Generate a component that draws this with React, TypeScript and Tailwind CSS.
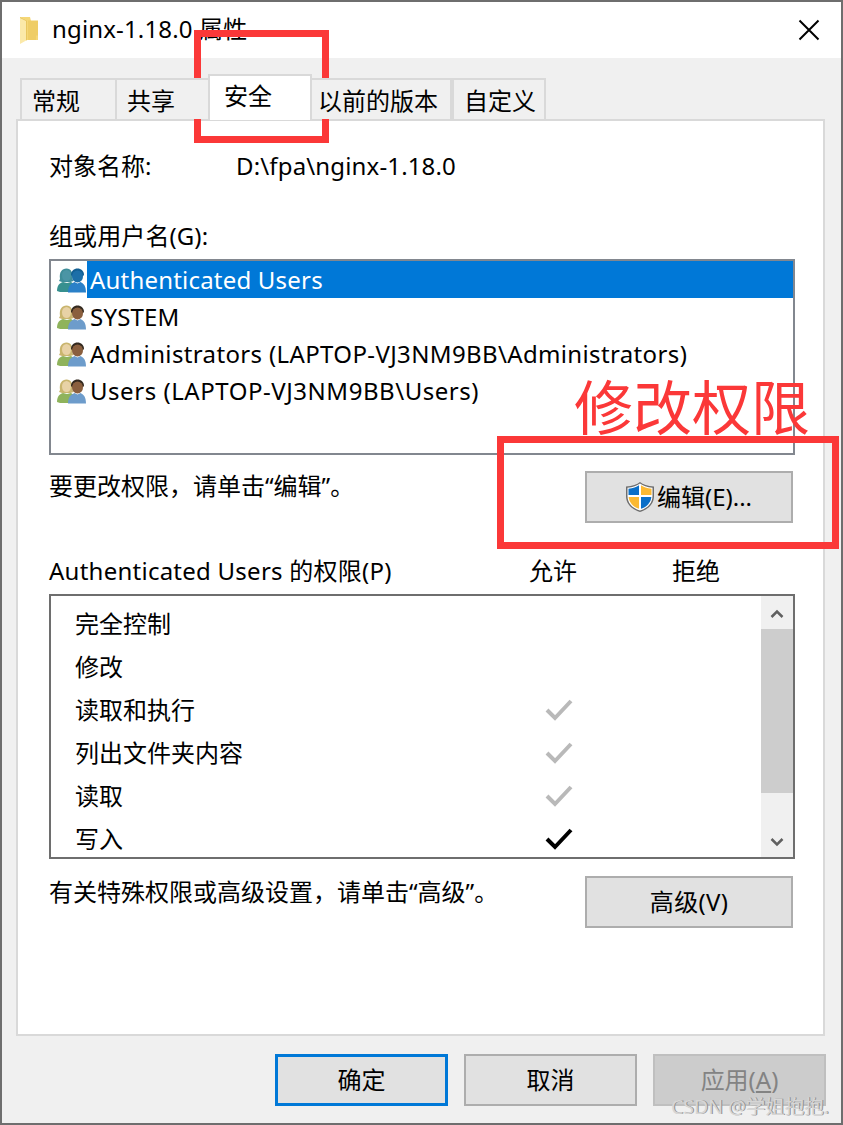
const font = {
  fontFamily: '"Noto Sans", "Noto Sans CJK SC", sans-serif',
};

function FolderIcon() {
  return (
    <svg width="19" height="28" viewBox="0 0 19 28" className="shrink-0">
      <path d="M0 1h10l1 4h7v19l-11 0z" fill="#f5d777" />
      <path d="M8 4.500h10v15l-2 0 0 4.500H8z" fill="#efcd66" />
      <path d="M0 1l7 3.500V24l-7 4z" fill="#fbe9a9" />
      <path d="M0 1l7 3.500V24l-1 .6V5L0 2z" fill="#e8c660" />
    </svg>
  );
}

function UsersIcon({ selected }: { selected?: boolean }) {
  const hairBack = selected ? "#3f8d99" : "#c9b56e";
  const faceBack = selected ? "#4b95a5" : "#e8d2a6";
  const bodyBack = selected ? "#37908f" : "#8fb35c";
  const hairFront = selected ? "#135f93" : "#33291f";
  const faceFront = selected ? "#1d6fa8" : "#8a5f3e";
  const bodyFront = selected ? "#2a80c8" : "#6d9ccb";
  return (
    <svg width="29" height="26" viewBox="0 0 29 26" className="shrink-0">
      <path d="M3 12C2 5 5 1.500 9.500 1.500S16 5 15.500 12l1 2-3 1H5l-3-1z" fill={hairBack} />
      <ellipse cx="9.500" cy="8.500" rx="4.500" ry="5.500" fill={faceBack} />
      <path d="M0 24c0-5 2-8 6-9l4 1 4-1 3 2v8l-14 0z" fill={bodyBack} />
      <path d="M14 8c0-4 3-6.500 6.500-6.500S27 4 27 8l-1 1H15z" fill={hairFront} />
      <ellipse cx="20.500" cy="9.500" rx="5.500" ry="6" fill={faceFront} />
      <path d="M11 25.500c0-6 2.500-9 6.500-10.500l3 1.500 3-1.500c3.500 1.500 5.500 4.500 5.500 10.500z" fill={bodyFront} />
    </svg>
  );
}

function ShieldIcon() {
  return (
    <svg width="28" height="30" viewBox="0 0 28 30" className="shrink-0">
      <path d="M14 0c3 2.500 7.500 4 14 4.500V14c0 8-6 13.500-14 16C6 27.500 0 22 0 14V4.500C6.500 4 11 2.500 14 0z" fill="#6e6e6e" />
      <path d="M14 1.500c3 2.200 7 3.700 12.500 4.300V14c0 7.500-5.500 12.500-12.500 14.500C7 26.500 1.500 21.500 1.500 14V5.800C7 5.200 11 3.700 14 1.500z" fill="#fff" />
      <path d="M13 3.300V13H2.500V6.800C7 6.300 10.500 5 13 3.300z" fill="#0a6fc8" />
      <path d="M15 3.300c2.500 1.700 6 3 10.500 3.500V13H15z" fill="#fbb933" />
      <path d="M2.600 15H13v11.800C7 24.800 3.200 20.500 2.600 15z" fill="#fbb933" />
      <path d="M15 15h10.400c-.6 5.500-4.400 9.800-10.400 11.800z" fill="#0a6fc8" />
    </svg>
  );
}

function Check({ muted }: { muted?: boolean }) {
  return (
    <svg width="28" height="24" viewBox="0 0 28 24">
      <path
        d="M2 12l8 8L26 3"
        fill="none"
        stroke={muted ? "#b9b9b9" : "#000"}
        strokeWidth="4"
      />
    </svg>
  );
}

const buttonTones = {
  normal: "bg-[#e1e1e1] border-2 border-[#adadad] text-black",
  primary: "bg-[#e1e1e1] border-[3px] border-[#0078d7] text-black",
  disabled: "bg-[#cccccc] border-2 border-[#bfbfbf] text-[#838383]",
};

function Button({
  children,
  className,
  tone = "normal",
}: {
  children: React.ReactNode;
  className?: string;
  tone?: keyof typeof buttonTones;
}) {
  return (
    <button className={`flex items-center justify-center text-[24px] ${buttonTones[tone]} ${className ?? ""}`}>
      {children}
    </button>
  );
}

const tabs = [
  { label: "常规", cls: "w-[95px] pl-[10px] border-r-0" },
  { label: "共享", cls: "w-[93px] pl-[10px] border-r-0" },
  { label: "安全", active: true },
  { label: "以前的版本", cls: "w-[140px] pl-[6px] border-l-0" },
  { label: "自定义", cls: "w-[94px] pl-[10px]" },
];

const users = [
  { name: "Authenticated Users", selected: true, track: "tracking-[0.2px]" },
  { name: "SYSTEM", track: "tracking-[0.2px]" },
  { name: "Administrators (LAPTOP-VJ3NM9BB\\Administrators)", track: "tracking-[0.36px]" },
  { name: "Users (LAPTOP-VJ3NM9BB\\Users)", track: "tracking-[0.54px]" },
];

const perms = [
  { name: "完全控制" },
  { name: "修改" },
  { name: "读取和执行", check: "muted" },
  { name: "列出文件夹内容", check: "muted" },
  { name: "读取", check: "muted" },
  { name: "写入", check: "solid" },
];

export default function App() {
  return (
    <div
      style={font}
      className="relative w-[843px] h-[1125px] overflow-hidden flex flex-col bg-[#f0f0f0] border-2 border-[#6e6e6e] text-[24px] text-black"
    >
      {/* Title bar */}
      <div className="h-[56px] shrink-0 bg-white flex items-center pl-[18px]">
        <FolderIcon />
        <span className="ml-[13px] leading-[32px] tracking-[0.15px] -mt-[2px]">nginx-1.18.0 属性</span>
        <svg width="22" height="22" viewBox="0 0 22 22" className="ml-auto mr-[21px]">
          <path d="M1.500 1.500l19 19M20.500 1.500l-19 19" stroke="#000" strokeWidth="2" />
        </svg>
      </div>

      {/* Tabs */}
      <div className="flex items-end h-[45px] mt-[16px] pl-[18px] shrink-0 relative z-10">
        {tabs.map((t) =>
          t.active ? (
            <div
              key={t.label}
              className="w-[104px] h-[46px] -mb-px bg-white border-2 border-b-0 border-[#d9d9d9] pl-[14px] pt-[2px] leading-[36px]"
            >
              {t.label}
            </div>
          ) : (
            <div
              key={t.label}
              className={`${t.cls} h-[41px] bg-[#f0f0f0] border-2 border-b-0 border-[#d9d9d9] pt-[3px] leading-[36px] whitespace-nowrap overflow-hidden`}
            >
              {t.label}
            </div>
          )
        )}
      </div>

      {/* Panel */}
      <div className="ml-[14px] w-[809px] h-[917px] shrink-0 bg-white border-2 border-[#d9d9d9] pl-[31px] pr-[28px] flex flex-col">
        <div className="flex h-[32px] mt-[29px] leading-[32px]">
          <span className="w-[187px]">对象名称:</span>
          <span className="tracking-[0.15px]">D:\fpa\nginx-1.18.0</span>
        </div>
        <div className="h-[32px] mt-[38px] leading-[32px] tracking-[0.1px]">组或用户名(G):</div>

        <div className="mt-[7px] h-[196px] shrink-0 border-2 border-[#82878f] pl-[6px]">
          {users.map((u) => (
            <div key={u.name} className="flex items-center h-[37px]">
              <UsersIcon selected={u.selected} />
              <span
                className={`ml-[1px] pl-[3px] h-[37px] leading-[37px] whitespace-nowrap ${u.track} ${u.selected ? "flex-1 bg-[#0078d7] text-white" : ""}`}
              >
                {u.name}
              </span>
            </div>
          ))}
        </div>

        <div className="flex justify-between mt-[16px]">
          <span className="h-[32px] leading-[32px] -mt-px">{"要更改权限\uFF0C请单击“编辑”。"}</span>
          <Button className="w-[208px] h-[52px] gap-[3px] mr-[2px]">
            <ShieldIcon />
            <span>编辑(E)...</span>
          </Button>
        </div>

        <div className="flex h-[32px] mt-[32px] leading-[32px]">
          <span className="w-[480px] tracking-[0.25px]">Authenticated Users 的权限(P)</span>
          <span className="w-[143px]">允许</span>
          <span>拒绝</span>
        </div>

        <div className="mt-[7px] h-[265px] shrink-0 border-2 border-[#6e6e6e] flex">
          <div className="flex-1 pt-[6px] pl-[24px]">
            {perms.map((p) => (
              <div key={p.name} className="flex items-center h-[43px]">
                <span className="w-[470px] leading-[32px]">{p.name}</span>
                {p.check && <Check muted={p.check === "muted"} />}
              </div>
            ))}
          </div>
          <div className="w-[32px] bg-[#f0f0f0] flex flex-col">
            <div className="h-[33px] pt-[3px] flex items-center justify-center">
              <svg width="14" height="10" viewBox="0 0 14 10">
                <path d="M1.500 8L7 2.500 12.500 8" fill="none" stroke="#606060" strokeWidth="2.500" />
              </svg>
            </div>
            <div className="h-[164px] bg-[#cdcdcd]" />
            <div className="flex-1 flex items-end justify-center pb-[10px]">
              <svg width="14" height="10" viewBox="0 0 14 10">
                <path d="M1.500 2L7 7.500 12.500 2" fill="none" stroke="#606060" strokeWidth="2.500" />
              </svg>
            </div>
          </div>
        </div>

        <div className="flex justify-between mt-[17px]">
          <span className="h-[32px] leading-[32px]">{"有关特殊权限或高级设置\uFF0C请单击“高级”。"}</span>
          <Button className="w-[208px] h-[52px] mr-[2px] tracking-[0.3px]">高级(V)</Button>
        </div>
      </div>

      {/* Footer buttons */}
      <div className="flex gap-[16px] mt-[18px] ml-[273px]">
        <Button tone="primary" className="w-[173px] h-[52px]">确定</Button>
        <Button className="w-[173px] h-[52px]">取消</Button>
        <Button tone="disabled" className="w-[173px] h-[52px]">
          <span>
            应用(<span className="underline">A</span>)
          </span>
        </Button>
      </div>

      {/* Annotations drawn on top of the dialog */}
      <div className="absolute left-[192px] top-[28px] w-[135px] h-[113px] border-[7px] border-[#fb3838]" />
      <div className="absolute left-[495px] top-[434px] w-[342px] h-[113px] border-[7px] border-[#fb3838]" />
      <div className="absolute left-[572px] top-[365px] text-[59px] leading-[80px] text-[#fb3838] whitespace-nowrap">
        修改权限
      </div>
      <div className="absolute left-[669px] top-[1094px] text-[19.5px] leading-[22px] text-[#d6d6d6] [text-shadow:1px_0_0_#8f8f8f] whitespace-nowrap">
        CSDN @学姐抱抱.
      </div>
    </div>
  );
}
